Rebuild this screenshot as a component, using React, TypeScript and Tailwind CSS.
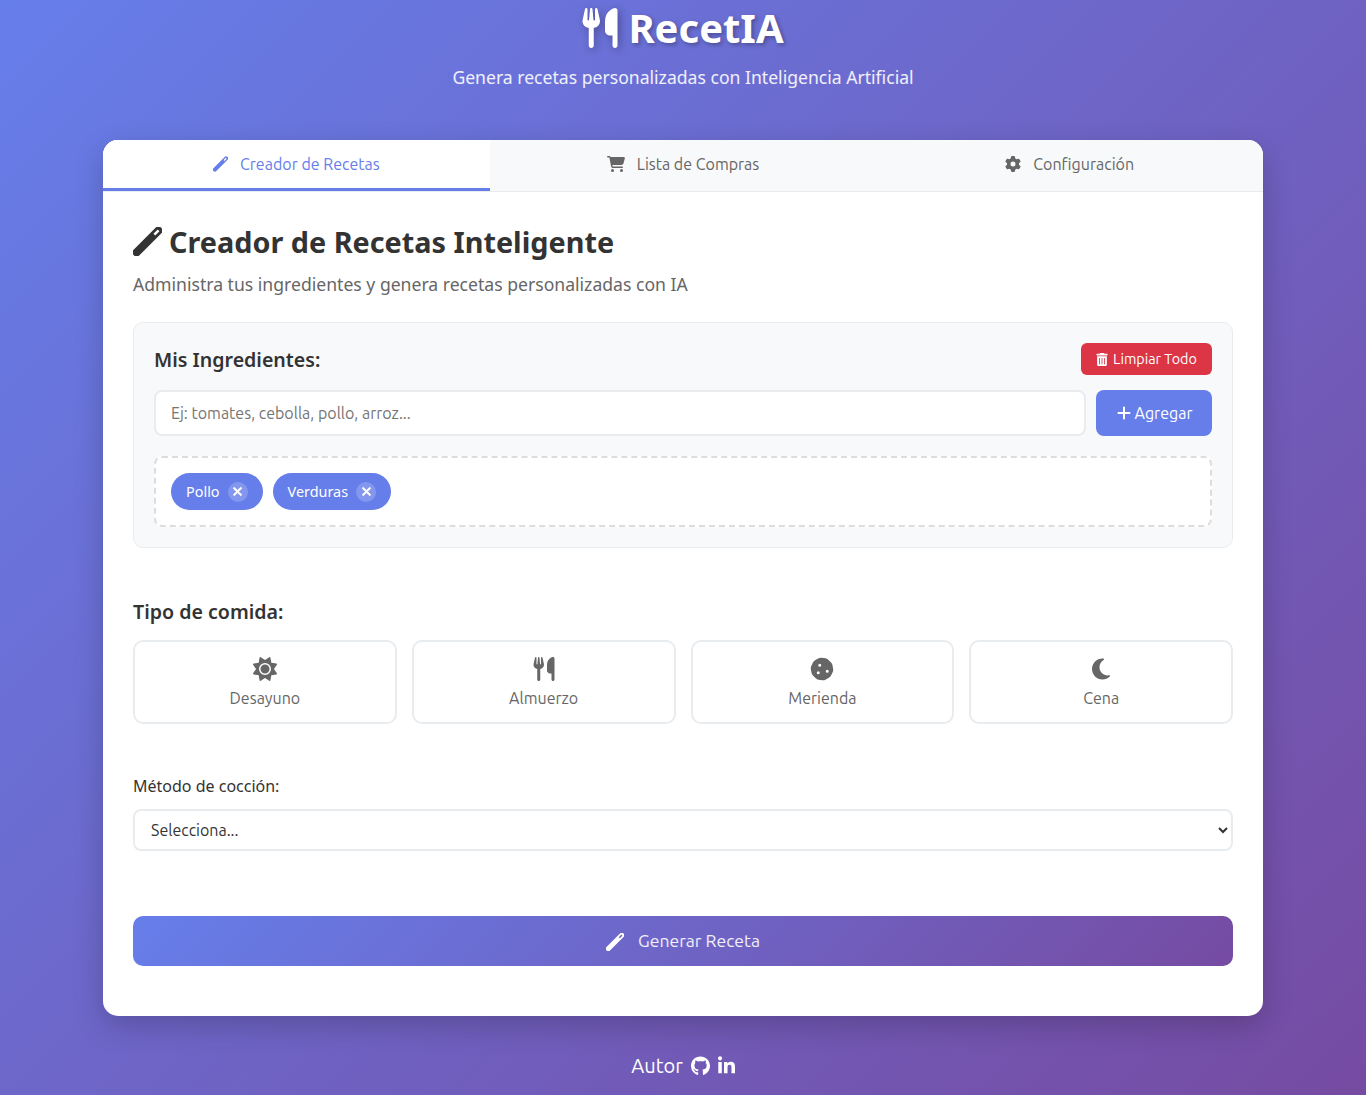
import { FaUtensils, FaCartShopping, FaGear, FaTrashCan, FaPlus, FaXmark, FaSun, FaCookie, FaMoon, FaGithub, FaLinkedinIn } from 'react-icons/fa6';

const uiFont = "font-['Ubuntu','Lato','Liberation_Sans',sans-serif]";

// diagonal marker used across the page, the slot is a hole so it shows the background
function Marker({ className }: { className?: string }) {
    return (
        <svg viewBox="0 0 24 24" fill="currentColor" className={className}>
            <path
                fillRule="evenodd"
                transform="rotate(-45 12 12)"
                d="M-0.7 8.7H24.7A3.3 3.3 0 0 1 24.7 15.3H-0.7A3.3 3.3 0 0 1 -0.7 8.7ZM20 11H25V13H20Z"
            />
        </svg>
    );
}

const tabs = [
    { label: "Creador de Recetas", icon: Marker, iconClass: "h-4 w-[15px]", active: true },
    { label: "Lista de Compras", icon: FaCartShopping, iconClass: "h-4 w-[18px]", active: false },
    { label: "Configuración", icon: FaGear, iconClass: "h-4 w-4", active: false },
];

const meals = [
    { label: "Desayuno", icon: FaSun },
    { label: "Almuerzo", icon: FaUtensils },
    { label: "Merienda", icon: FaCookie },
    { label: "Cena", icon: FaMoon },
];

function Chip({ label }: { label: string }) {
    return (
        <span className="flex h-[37px] items-center gap-2 rounded-full bg-[#667eea] pl-[15px] pr-[15px] text-[14.4px] text-white">
            {label}
            <span className="flex h-5 w-5 items-center justify-center rounded-full bg-white/20">
                <FaXmark className="mb-px h-[13px] w-[13px] stroke-[30px]" />
            </span>
        </span>
    );
}

export default function App() {
    return (
        <div className="h-[1095px] overflow-hidden bg-[linear-gradient(135deg,#667eea_0%,#764ba2_100%)] font-['Noto_Sans',sans-serif]">
            <header className="flex flex-col items-center pt-[4px] text-white">
                <h1 className="flex h-[48px] items-center gap-[10px] text-[40px] font-bold [text-shadow:2px_2px_4px_rgba(0,0,0,0.3)]">
                    <FaUtensils className="h-10 w-[36px] drop-shadow-[2px_2px_4px_rgba(0,0,0,0.3)]" />
                    RecetIA
                </h1>
                <p className="mt-[13px] text-[17.6px] leading-[25px] text-white/90">Genera recetas personalizadas con Inteligencia Artificial</p>
            </header>

            <main className="mx-auto mt-[50px] h-[876px] w-[1160px] overflow-hidden rounded-[15px] bg-white shadow-[0_10px_30px_rgba(0,0,0,0.2)]">
                <nav className={`flex h-[52px] border-b border-[#e9ecef] bg-[#f8f9fa] ${uiFont}`}>
                    {tabs.map((tab) => (
                        <div
                            key={tab.label}
                            className={tab.active
                                ? "flex h-[51px] flex-1 items-center justify-center gap-3 border-b-[3px] border-[#667eea] bg-white text-base text-[#667eea]"
                                : "flex h-[51px] flex-1 items-center justify-center gap-3 border-b-[3px] border-transparent text-base text-[#666]"}
                        >
                            <tab.icon className={tab.iconClass} />
                            {tab.label}
                        </div>
                    ))}
                </nav>

                <div className="px-[30px] pt-[29px]">
                    <h2 className="flex h-[41px] items-center gap-[7px] text-[28.8px] font-bold text-[#333]">
                        <Marker className="h-[29px] w-[29px]" />
                        Creador de Recetas Inteligente
                    </h2>
                    <p className="mt-[10px] text-[17.6px] leading-[24px] text-[#666]">Administra tus ingredientes y genera recetas personalizadas con IA</p>

                    <section className="mt-[26px] h-[226px] rounded-[10px] border border-[#e9ecef] bg-[#f8f9fa] px-5 pt-5">
                        <div className="flex h-[32px] items-center justify-between">
                            <h3 className="pt-[2px] text-[19.6px] font-semibold text-[#333]">Mis Ingredientes:</h3>
                            <button className={`flex h-[32px] w-[131px] items-center justify-center gap-[5px] rounded-md bg-[#dc3545] pt-px text-[14.4px] text-white ${uiFont}`}>
                                <FaTrashCan className="h-[13px] w-3" />
                                Limpiar Todo
                            </button>
                        </div>
                        <div className="mt-[15px] flex gap-[10px]">
                            <div className={`flex h-[46px] flex-1 items-center rounded-lg border-2 border-[#e9ecef] bg-white px-[15px] text-base text-[#757575] ${uiFont}`}>
                                Ej: tomates, cebolla, pollo, arroz...
                            </div>
                            <button className={`flex h-[46px] w-[116px] items-center justify-center gap-[3px] rounded-lg bg-[#667eea] text-base text-white ${uiFont}`}>
                                <FaPlus className="h-4 w-4" />
                                Agregar
                            </button>
                        </div>
                        <div className="mt-5 flex h-[71px] items-center gap-[10px] rounded-lg border-2 border-dashed border-[#ddd] bg-white px-[15px]">
                            <Chip label="Pollo" />
                            <Chip label="Verduras" />
                        </div>
                    </section>

                    <h3 className="mt-[50px] text-[19.6px] leading-[28px] font-semibold text-[#333]">Tipo de comida:</h3>
                    <div className={`mt-[14px] grid grid-cols-4 gap-[15px] ${uiFont}`}>
                        {meals.map((meal) => (
                            <div key={meal.label} className="flex h-[84px] flex-col items-center rounded-[10px] border-2 border-[#e9ecef] bg-white pt-[15px] text-base text-[#666]">
                                <meal.icon className="h-6 w-6" />
                                <span className="mt-[7px] leading-[20px]">{meal.label}</span>
                            </div>
                        ))}
                    </div>

                    <label className="mt-[50px] block text-base leading-[24px] text-[#333]">Método de cocción:</label>
                    <div className={`mt-[11px] ${uiFont}`}>
                        <select className="block h-[42px] w-full rounded-lg border-2 border-[#e9ecef] bg-white pl-3 pr-[15px] text-base text-[#333]">
                            <option>Selecciona...</option>
                        </select>
                    </div>

                    <button className={`mt-[65px] flex h-[50px] w-full items-center justify-center gap-[14px] rounded-[10px] bg-[linear-gradient(135deg,#667eea_0%,#764ba2_100%)] pt-px text-[17.6px] text-white/90 ${uiFont}`}>
                        <Marker className="h-[18px] w-[18px] text-white" />
                        Generar Receta
                    </button>
                </div>
            </main>

            <footer className={`mt-[36px] flex items-center justify-center gap-2 text-xl text-white ${uiFont}`}>
                Autor
                <FaGithub className="h-5 w-[19px]" />
                <FaLinkedinIn className="h-5 w-[17px]" />
            </footer>
        </div>
    );
}
